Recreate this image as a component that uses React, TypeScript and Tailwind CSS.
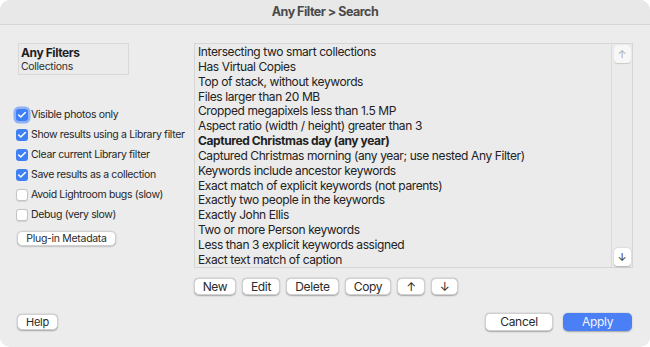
import { Check } from "lucide-react";

const filters = [
  "Intersecting two smart collections",
  "Has Virtual Copies",
  "Top of stack, without keywords",
  "Files larger than 20 MB",
  "Cropped megapixels less than 1.5 MP",
  "Aspect ratio (width / height) greater than 3",
  "Captured Christmas day (any year)",
  "Captured Christmas morning (any year; use nested Any Filter)",
  "Keywords include ancestor keywords",
  "Exact match of explicit keywords (not parents)",
  "Exactly two people in the keywords",
  "Exactly John Ellis",
  "Two or more Person keywords",
  "Less than 3 explicit keywords assigned",
  "Exact text match of caption",
];

const options = [
  { label: "Visible photos only", checked: true, focus: true },
  { label: "Show results using a Library filter", checked: true },
  { label: "Clear current Library filter", checked: true },
  { label: "Save results as a collection", checked: true },
  { label: "Avoid Lightroom bugs (slow)", checked: false },
  { label: "Debug (very slow)", checked: false },
];

const btn =
  "flex items-center justify-center bg-white rounded-[5px] text-[#2a2a2a] shadow-[0_0.5px_1.5px_rgba(0,0,0,0.3)] border-[0.5px] border-[#d0d0d0]";

function Checkbox({ checked, focus }: { checked: boolean; focus?: boolean }) {
  return (
    <div
      className={
        "w-[12px] h-[12px] shrink-0 rounded-[3px] flex items-center justify-center " +
        (checked
          ? "bg-[#3f7ff6] "
          : "bg-white border border-[#c4c4c4] shadow-[0_0.5px_1px_rgba(0,0,0,0.1)] ") +
        (focus ? "ring-[2.5px] ring-[#8eb2f5]" : "")
      }
    >
      {checked && <Check className="w-[10px] h-[10px] text-white" strokeWidth={3.5} />}
    </div>
  );
}

export default function App() {
  return (
    <div
      className="w-[650px] h-[347px] bg-white overflow-hidden"
      style={{ fontFamily: "Inter, 'Noto Sans', sans-serif" }}
    >
      <div className="h-full rounded-[10px] bg-[#ececec] flex flex-col">
        <div className="h-[25px] shrink-0 bg-[#e8e8e8] border-b border-[#d6d6d6] rounded-t-[10px] flex items-center justify-center text-[12.5px] tracking-[-0.5px] font-bold text-[#4a4a4a]">
          Any Filter &gt; Search
        </div>

        <div className="flex pt-[18px]">
          <div className="w-[194px] shrink-0 pl-[16px] flex flex-col">
            <div className="ml-[2px] w-[111px] h-[32px] border border-[#d8d8d8] bg-[#ebebeb] px-[2px] flex flex-col justify-center">
              <div className="text-[12px] tracking-[-0.4px] font-bold text-[#1e1e1e] leading-[15px]">Any Filters</div>
              <div className="text-[10.5px] tracking-[-0.3px] text-[#2e2e2e] leading-[14px]">Collections</div>
            </div>
            <div className="mt-[30px] flex flex-col">
              {options.map((o) => (
                <div key={o.label} className="h-[20px] flex items-center gap-[3px]">
                  <Checkbox checked={o.checked} focus={o.focus} />
                  <span className="text-[10.5px] tracking-[-0.35px] text-[#262626] whitespace-nowrap">{o.label}</span>
                </div>
              ))}
            </div>
            <div className={btn + " mt-[6px] ml-[1px] w-[99px] h-[15px] text-[10.5px] tracking-[-0.3px]"}>
              Plug-in Metadata
            </div>
          </div>

          <div className="flex flex-col">
            <div className="w-[439px] h-[225px] border border-[#d6d6d6] bg-[#ebebeb] flex">
              <div className="flex-1 pl-[3px] pt-[1px] overflow-hidden">
                {filters.map((f, i) => (
                  <div
                    key={f}
                    className={
                      "text-[12px] tracking-[-0.4px] leading-[14.85px] text-[#222] whitespace-nowrap " +
                      (i === 6 ? "font-bold" : "")
                    }
                  >
                    {f}
                  </div>
                ))}
              </div>
              <div className="w-[21px] border-l border-[#dadada] flex flex-col justify-between items-center py-[1px]">
                <div className="w-[17px] h-[18px] rounded-[4px] bg-[#f7f7f7] shadow-[0_0.5px_1px_rgba(0,0,0,0.15)] flex items-center justify-center text-[11px] text-[#b0b0b0]">
                  ↑
                </div>
                <div className="w-[17px] h-[18px] rounded-[4px] bg-white shadow-[0_0.5px_1.5px_rgba(0,0,0,0.25)] flex items-center justify-center text-[11px] text-[#333]">
                  ↓
                </div>
              </div>
            </div>
            <div className="mt-[10px] flex gap-[6px] text-[12px] tracking-[-0.3px]">
              <div className={btn + " w-[42px] h-[17px]"}>New</div>
              <div className={btn + " w-[38px] h-[17px]"}>Edit</div>
              <div className={btn + " w-[53px] h-[17px]"}>Delete</div>
              <div className={btn + " w-[46px] h-[17px]"}>Copy</div>
              <div className={btn + " w-[28px] h-[17px]"}>↑</div>
              <div className={btn + " w-[27px] h-[17px]"}>↓</div>
            </div>
          </div>
        </div>

        <div className="mt-[18px] flex items-center pl-[17px] pr-[18px] tracking-[-0.3px]">
          <div className={btn + " w-[41px] h-[16px] text-[11px]"}>Help</div>
          <div className="flex-1" />
          <div className={btn + " w-[68px] h-[18px] text-[12px]"}>Cancel</div>
          <div className="w-[10px]" />
          <div className="w-[69px] h-[18px] rounded-[5px] bg-[#4a7ff6] shadow-[0_0.5px_1.5px_rgba(0,0,0,0.3)] flex items-center justify-center text-[12px] text-[#f2f5ff]">
            Apply
          </div>
        </div>
      </div>
    </div>
  );
}
